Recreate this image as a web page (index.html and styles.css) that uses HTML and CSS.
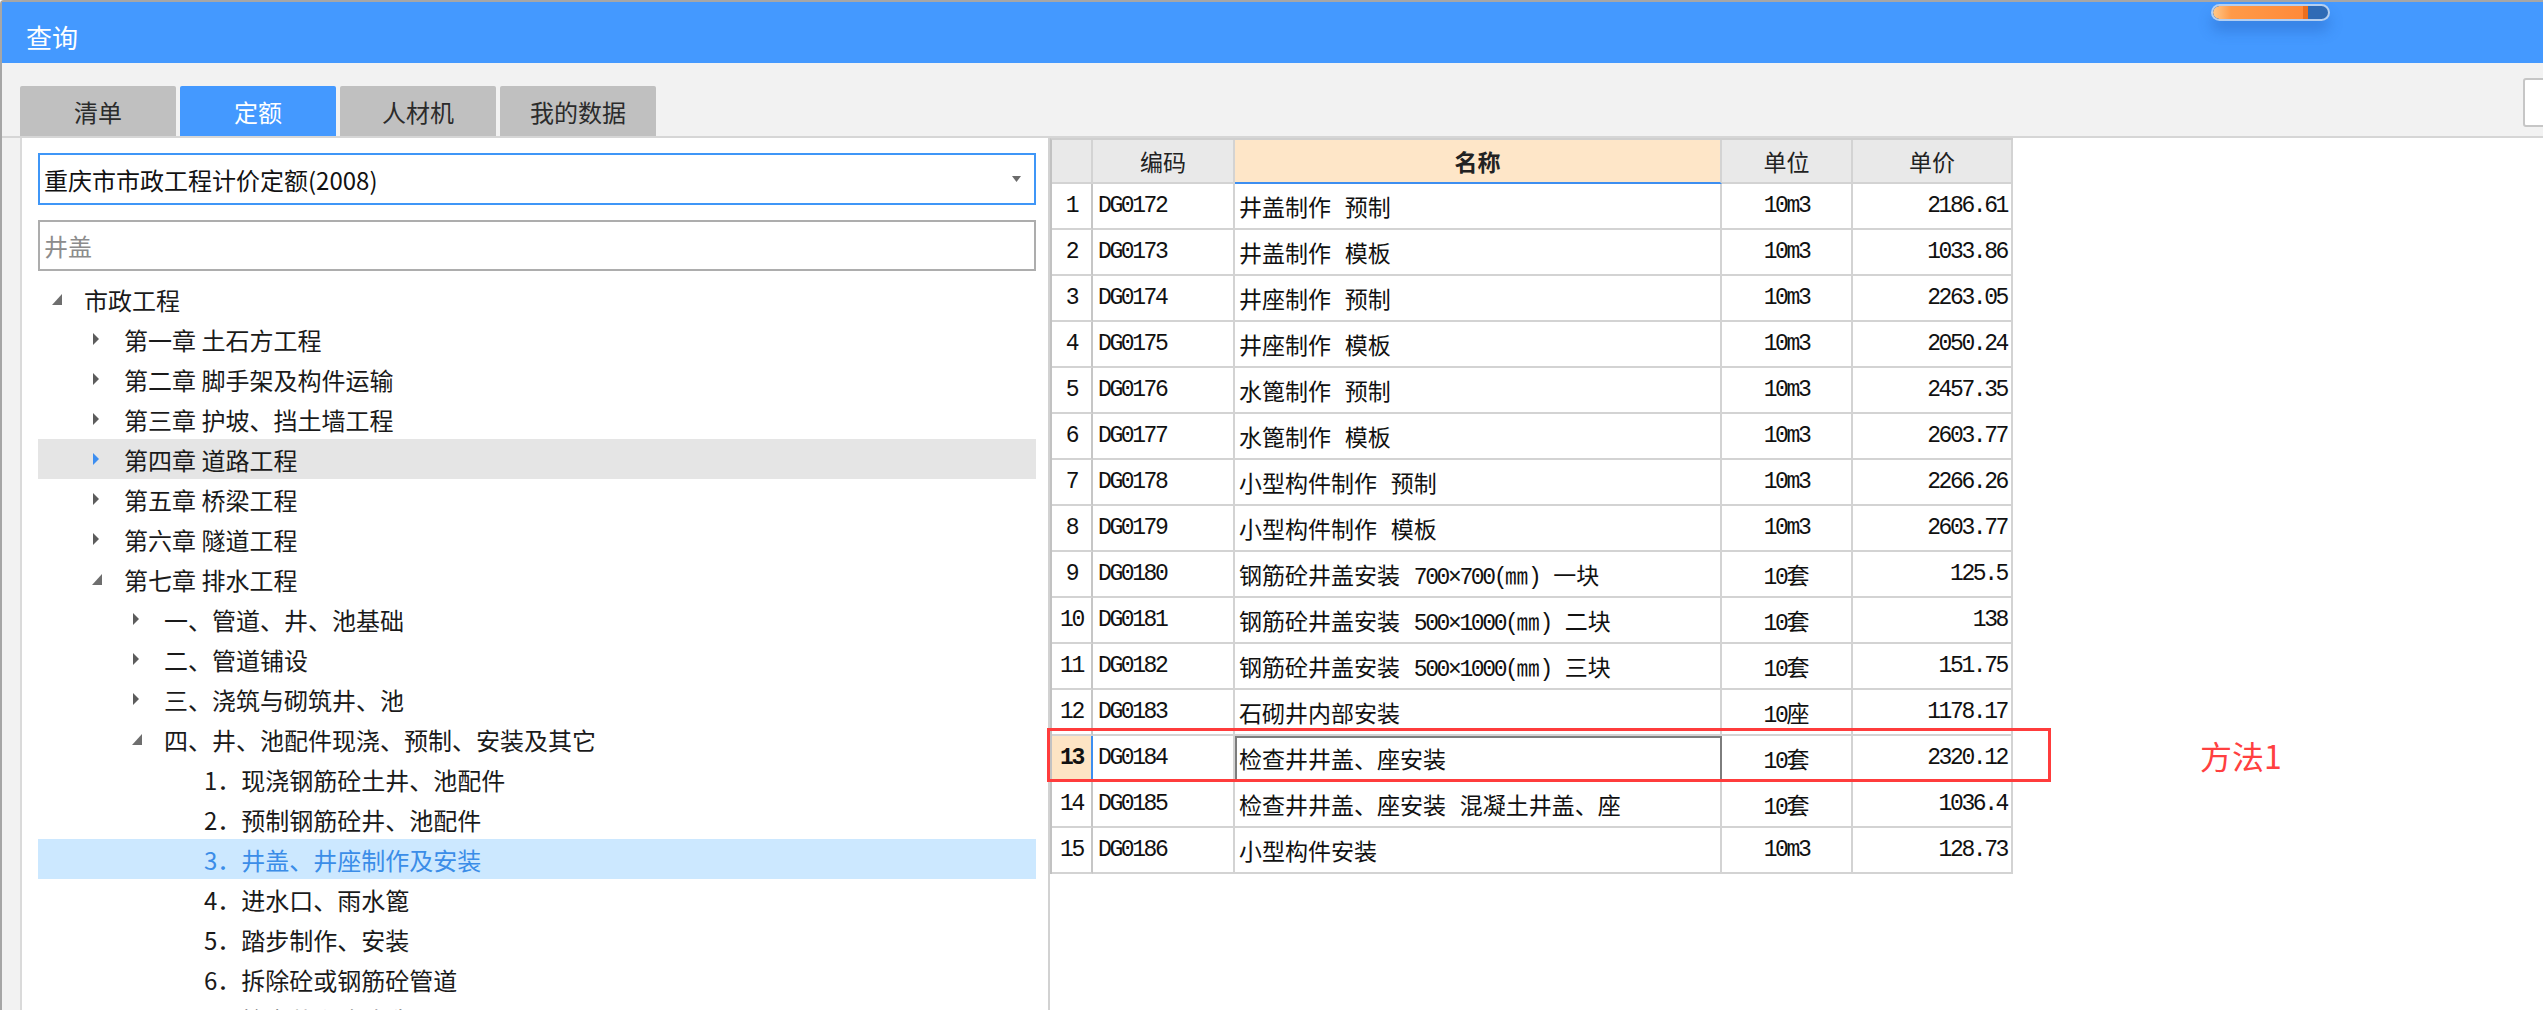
FILE: index.html
```html
<!DOCTYPE html>
<html lang="zh-CN">
<head>
<meta charset="utf-8">
<title>查询</title>
<link rel="stylesheet" href="styles.css">
</head>
<body>
<div class="window">
  <div class="titlebar">
    <span class="title">查询</span>
    <div class="progress"><div class="progress-fill"></div></div>
  </div>
  <div class="toolbar">
    <div class="tab">清单</div>
    <div class="tab active">定额</div>
    <div class="tab">人材机</div>
    <div class="tab">我的数据</div>
    <div class="toolbar-input"></div>
  </div>
  <div class="main">
    <div class="left-panel">
      <div class="select">
        <span class="select-text">重庆市市政工程计价定额(2008)</span>
        <svg class="select-arrow" width="9" height="6" viewBox="0 0 9 6"><path d="M0 0 H9 L4.5 6 Z" fill="#6b6b6b"/></svg>
      </div>
      <div class="search">井盖</div>
      <ul class="tree">
        <li class="node lv0"><span class="caret"><svg width="10" height="11" viewBox="0 0 10 11"><path d="M10 0 V11 H0 Z" fill="#6e6e6e"/></svg></span>市政工程</li>
        <li class="node lv1"><span class="caret"><svg width="8" height="12" viewBox="0 0 8 12"><path d="M1 0 L7 6 L1 12 Z" fill="#5c5c5c"/></svg></span>第一章 土石方工程</li>
        <li class="node lv1"><span class="caret"><svg width="8" height="12" viewBox="0 0 8 12"><path d="M1 0 L7 6 L1 12 Z" fill="#5c5c5c"/></svg></span>第二章 脚手架及构件运输</li>
        <li class="node lv1"><span class="caret"><svg width="8" height="12" viewBox="0 0 8 12"><path d="M1 0 L7 6 L1 12 Z" fill="#5c5c5c"/></svg></span>第三章 护坡、挡土墙工程</li>
        <li class="node lv1 hover"><span class="caret"><svg width="8" height="12" viewBox="0 0 8 12"><path d="M1 0 L7 6 L1 12 Z" fill="#3d8ef0"/></svg></span>第四章 道路工程</li>
        <li class="node lv1"><span class="caret"><svg width="8" height="12" viewBox="0 0 8 12"><path d="M1 0 L7 6 L1 12 Z" fill="#5c5c5c"/></svg></span>第五章 桥梁工程</li>
        <li class="node lv1"><span class="caret"><svg width="8" height="12" viewBox="0 0 8 12"><path d="M1 0 L7 6 L1 12 Z" fill="#5c5c5c"/></svg></span>第六章 隧道工程</li>
        <li class="node lv1"><span class="caret"><svg width="10" height="11" viewBox="0 0 10 11"><path d="M10 0 V11 H0 Z" fill="#6e6e6e"/></svg></span>第七章 排水工程</li>
        <li class="node lv2"><span class="caret"><svg width="8" height="12" viewBox="0 0 8 12"><path d="M1 0 L7 6 L1 12 Z" fill="#5c5c5c"/></svg></span>一、管道、井、池基础</li>
        <li class="node lv2"><span class="caret"><svg width="8" height="12" viewBox="0 0 8 12"><path d="M1 0 L7 6 L1 12 Z" fill="#5c5c5c"/></svg></span>二、管道铺设</li>
        <li class="node lv2"><span class="caret"><svg width="8" height="12" viewBox="0 0 8 12"><path d="M1 0 L7 6 L1 12 Z" fill="#5c5c5c"/></svg></span>三、浇筑与砌筑井、池</li>
        <li class="node lv2"><span class="caret"><svg width="10" height="11" viewBox="0 0 10 11"><path d="M10 0 V11 H0 Z" fill="#6e6e6e"/></svg></span>四、井、池配件现浇、预制、安装及其它</li>
        <li class="node lv3"><span class="caret"></span>1．现浇钢筋砼土井、池配件</li>
        <li class="node lv3"><span class="caret"></span>2．预制钢筋砼井、池配件</li>
        <li class="node lv3 selected"><span class="caret"></span>3．井盖、井座制作及安装</li>
        <li class="node lv3"><span class="caret"></span>4．进水口、雨水篦</li>
        <li class="node lv3"><span class="caret"></span>5．踏步制作、安装</li>
        <li class="node lv3"><span class="caret"></span>6．拆除砼或钢筋砼管道</li>
        <li class="node lv3"><span class="caret"></span>7．检查井升降改造</li>
      </ul>
    </div>
    <div class="right-panel">
      <div class="grid">
        <div class="cell hd"></div>
        <div class="cell hd">编码</div>
        <div class="cell hd sorted">名称</div>
        <div class="cell hd">单位</div>
        <div class="cell hd">单价</div>

        <div class="cell num">1</div><div class="cell code">DG0172</div><div class="cell name"><span>井盖制作 预制</span></div><div class="cell unit"><span class="m">10m3</span></div><div class="cell price">2186.61</div>
        <div class="cell num">2</div><div class="cell code">DG0173</div><div class="cell name"><span>井盖制作 模板</span></div><div class="cell unit"><span class="m">10m3</span></div><div class="cell price">1033.86</div>
        <div class="cell num">3</div><div class="cell code">DG0174</div><div class="cell name"><span>井座制作 预制</span></div><div class="cell unit"><span class="m">10m3</span></div><div class="cell price">2263.05</div>
        <div class="cell num">4</div><div class="cell code">DG0175</div><div class="cell name"><span>井座制作 模板</span></div><div class="cell unit"><span class="m">10m3</span></div><div class="cell price">2050.24</div>
        <div class="cell num">5</div><div class="cell code">DG0176</div><div class="cell name"><span>水篦制作 预制</span></div><div class="cell unit"><span class="m">10m3</span></div><div class="cell price">2457.35</div>
        <div class="cell num">6</div><div class="cell code">DG0177</div><div class="cell name"><span>水篦制作 模板</span></div><div class="cell unit"><span class="m">10m3</span></div><div class="cell price">2603.77</div>
        <div class="cell num">7</div><div class="cell code">DG0178</div><div class="cell name"><span>小型构件制作 预制</span></div><div class="cell unit"><span class="m">10m3</span></div><div class="cell price">2266.26</div>
        <div class="cell num">8</div><div class="cell code">DG0179</div><div class="cell name"><span>小型构件制作 模板</span></div><div class="cell unit"><span class="m">10m3</span></div><div class="cell price">2603.77</div>
        <div class="cell num">9</div><div class="cell code">DG0180</div><div class="cell name"><span>钢筋砼井盖安装 <span class="m">700×700(</span>㎜<span class="m">)</span> 一块</span></div><div class="cell unit"><span><span class="m">10</span>套</span></div><div class="cell price">125.5</div>
        <div class="cell num">10</div><div class="cell code">DG0181</div><div class="cell name"><span>钢筋砼井盖安装 <span class="m">500×1000(</span>㎜<span class="m">)</span> 二块</span></div><div class="cell unit"><span><span class="m">10</span>套</span></div><div class="cell price">138</div>
        <div class="cell num">11</div><div class="cell code">DG0182</div><div class="cell name"><span>钢筋砼井盖安装 <span class="m">500×1000(</span>㎜<span class="m">)</span> 三块</span></div><div class="cell unit"><span><span class="m">10</span>套</span></div><div class="cell price">151.75</div>
        <div class="cell num">12</div><div class="cell code">DG0183</div><div class="cell name"><span>石砌井内部安装</span></div><div class="cell unit"><span><span class="m">10</span>座</span></div><div class="cell price">1178.17</div>
        <div class="cell num current">13</div><div class="cell code">DG0184</div><div class="cell name focused"><span>检查井井盖、座安装</span></div><div class="cell unit"><span><span class="m">10</span>套</span></div><div class="cell price">2320.12</div>
        <div class="cell num">14</div><div class="cell code">DG0185</div><div class="cell name"><span>检查井井盖、座安装 混凝土井盖、座</span></div><div class="cell unit"><span><span class="m">10</span>套</span></div><div class="cell price">1036.4</div>
        <div class="cell num">15</div><div class="cell code">DG0186</div><div class="cell name"><span>小型构件安装</span></div><div class="cell unit"><span class="m">10m3</span></div><div class="cell price">128.73</div>
      </div>
      <div class="mark-box"></div>
      <div class="mark-label">方法1</div>
    </div>
  </div>
</div>
</body>
</html>
```

FILE: styles.css
```css
* { box-sizing: border-box; }
html, body { margin: 0; padding: 0; }
body {
  width: 2543px;
  height: 1010px;
  overflow: hidden;
  background: #fff;
  font-family: "Noto Sans CJK SC", "Noto Sans", sans-serif;
  color: #1a1a1a;
}
.window {
  height: 1010px;
  border-top: 2px solid #a6a6a6;
  border-left: 2px solid #a6a6a6;
  border-top-left-radius: 4px;
  background: #f2f2f2;
  display: flex;
  flex-direction: column;
}
.titlebar {
  height: 61px;
  flex: none;
  background: #4499ff;
  position: relative;
  display: flex;
  align-items: center;
  padding: 9px 0 0 24px;
}
.title { color: #fff; font-size: 26px; line-height: 1; }
.progress {
  position: absolute;
  left: 2209px;
  top: 2px;
  width: 119px;
  height: 17px;
  border: 2px solid rgba(214, 232, 255, 0.8);
  border-radius: 9px;
  background: #2f6bb5;
  box-shadow: 0 10px 14px rgba(20, 70, 150, 0.28);
  overflow: hidden;
}
.progress-fill {
  width: 95px;
  height: 100%;
  background: linear-gradient(to right, #ffc98a, #ff9a48 20%, #ff8a3a);
  border-right: 5px solid #ec6f1e;
  border-radius: 7px 0 0 7px;
}
.toolbar {
  height: 75px;
  flex: none;
  display: flex;
  align-items: flex-start;
  padding: 23px 0 0 18px;
  border-bottom: 2px solid #d6d6d6;
}
.tab {
  width: 156px;
  height: 50px;
  margin-right: 4px;
  background: #c0c0c0;
  color: #2b2b2b;
  font-size: 24px;
  display: flex;
  align-items: center;
  justify-content: center;
  border-radius: 2px 2px 0 0;
}
.tab.active { background: #4499ff; color: #fff; }
.toolbar-input {
  margin-left: auto;
  margin-right: -20px;
  margin-top: -8px;
  width: 40px;
  height: 49px;
  background: #fff;
  border: 2px solid #c6c6c6;
  border-radius: 3px;
}
.main {
  flex: 1;
  display: flex;
  padding-left: 18px;
  min-height: 0;
}
.left-panel {
  width: 1030px;
  flex: none;
  background: #fff;
  border-left: 2px solid #dadada;
  border-right: 2px solid #d2d2d2;
  padding: 15px 12px 0 16px;
  overflow: hidden;
}
.select {
  height: 52px;
  border: 2px solid #3f96f7;
  display: flex;
  align-items: center;
  padding: 0 13px 0 4px;
  font-size: 24px;
  color: #111;
}
.select-text { flex: 1; }
.search {
  margin-top: 15px;
  height: 51px;
  border: 2px solid #adadad;
  display: flex;
  align-items: center;
  padding-left: 4px;
  font-size: 24px;
  color: #8c8c8c;
}
.tree { list-style: none; margin: 8px 0 0; padding: 0; }
.node {
  height: 40px;
  display: flex;
  align-items: center;
  font-size: 24px;
  color: #1a1a1a;
  white-space: nowrap;
}
.lv0 { padding-left: 14px; }
.lv1 { padding-left: 54px; }
.lv2 { padding-left: 94px; }
.lv3 { padding-left: 134px; }
.caret { width: 32px; flex: none; display: flex; align-items: center; }
.node.hover { background: #e5e5e5; }
.node.selected { background: #cce8ff; color: #3b8de8; }

.right-panel { flex: 1; background: #fff; position: relative; }
.grid {
  display: grid;
  width: 963px;
  grid-template-columns: 41px 142px 487px 131px 160px;
  grid-template-rows: 44px;
  grid-auto-rows: 46px;
  border-left: 2px solid #c2c2c2;
  border-top: 2px solid #cfcfcf;
}
.cell {
  border-right: 2px solid #d3d3d3;
  border-bottom: 2px solid #d3d3d3;
  display: flex;
  align-items: center;
  font-size: 23px;
  white-space: pre;
  overflow: hidden;
  color: #111;
}
.hd { background: #e9e9e9; justify-content: center; color: #222; }
.hd.sorted { background: #fee6c8; font-weight: bold; border-bottom-color: #3d8ef0; }
.m, .num, .code, .price {
  font-family: "Liberation Mono", "Noto Sans CJK SC", monospace;
  letter-spacing: -2.4px;
}
.num { justify-content: center; border-right-color: #c6c6c6; }
.num.current { background: #fde4c4; font-weight: bold; border-right-color: #3d8ef0; }
.code { padding-left: 5px; }
.name {
  padding-left: 4px;
  font-family: "Liberation Mono", "Noto Sans CJK SC", monospace;
}
.name.focused { box-shadow: inset 2px 2px 0 0 #7d7d7d; border-right-color: #7d7d7d; border-bottom-color: #7d7d7d; }
.unit { justify-content: center; }
.price { justify-content: flex-end; padding-right: 4px; }
.mark-box {
  position: absolute;
  left: -3px;
  top: 590px;
  width: 1004px;
  height: 54px;
  border: 3px solid #ff3c3c;
}
.mark-label {
  position: absolute;
  left: 1150px;
  top: 598px;
  font-size: 32px;
  line-height: 1.2;
  color: #ff4040;
}
```
